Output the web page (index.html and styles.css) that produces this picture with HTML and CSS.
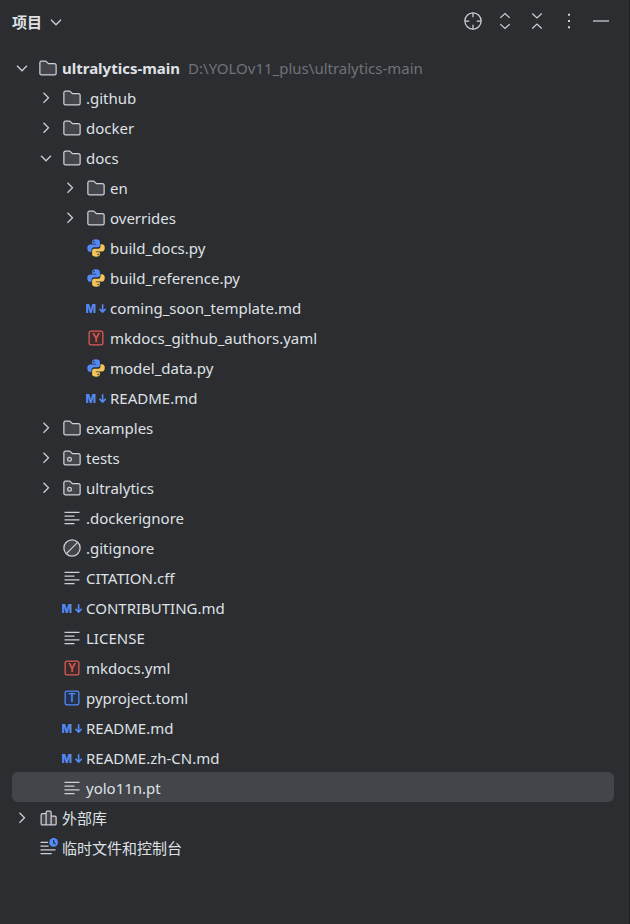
FILE: index.html
```html
<!DOCTYPE html>
<html lang="zh-CN">
<head>
<meta charset="utf-8">
<meta name="viewport" content="width=device-width, initial-scale=1">
<title>项目</title>
<link rel="stylesheet" href="styles.css">
</head>
<body>
<svg class="sprite" aria-hidden="true">
  <symbol id="down" viewBox="0 0 16 16"><path class="line" d="M4 6.200l4 4 4-4"/></symbol>
  <symbol id="right" viewBox="0 0 16 16"><path class="line" d="M6 3.800l4 4-4 4"/></symbol>
  <symbol id="folder" viewBox="0 0 16 16"><path class="shape" d="M8.106 4.346l.148.154H13A1.500 1.500 0 0 1 14.500 6v6.133c0 .82-.568 1.367-1.133 1.367H2.633c-.565 0-1.133-.547-1.133-1.367V3.867c0-.82.568-1.367 1.133-1.367h3.489a.5.5 0 0 1 .361.154z"/></symbol>
  <symbol id="package" viewBox="0 0 16 16"><use href="#folder"/><circle class="shape" cx="6" cy="9" r="1.500"/></symbol>
  <symbol id="python" viewBox="0 0 16 16">
    <path fill="#548af7" fill-rule="evenodd" d="M7.900 1C5.700 1 4.900 1.800 4.900 3v1.600h3.300v.6H3.500C1.900 5.200 1 6.300 1 8.100S1.900 11 3.300 11h1.100V9.500c0-1.200.9-2.100 2.100-2.100h3c.9 0 1.600-.7 1.600-1.600V3c0-1.300-1.100-2-3.200-2zM6.300 2.200a.65.65 0 1 1 0 1.300.65.65 0 0 1 0-1.300z"/>
    <path fill="#f2c55c" fill-rule="evenodd" transform="rotate(180 8 8)" d="M7.900 1C5.700 1 4.900 1.800 4.900 3v1.600h3.300v.6H3.500C1.900 5.200 1 6.300 1 8.100S1.900 11 3.300 11h1.100V9.500c0-1.200.9-2.100 2.100-2.100h3c.9 0 1.600-.7 1.600-1.600V3c0-1.300-1.100-2-3.200-2zM6.300 2.200a.65.65 0 1 1 0 1.300.65.65 0 0 1 0-1.300z"/>
  </symbol>
  <symbol id="markdown" viewBox="0 0 16 16"><text class="md-letter" x="-0.500" y="11.700">M</text><path class="arrow" d="M13.300 5v6M10.800 8.700l2.500 2.500 2.500-2.500"/></symbol>
  <symbol id="yaml" viewBox="0 0 16 16"><rect class="red" x="2.500" y="2.500" width="11" height="11" rx="1.500"/><text class="letter red-letter" x="8" y="11.200">Y</text></symbol>
  <symbol id="toml" viewBox="0 0 16 16"><rect class="blue" x="2.500" y="2.500" width="11" height="11" rx="1.500"/><text class="letter blue-letter" x="8" y="11.200">T</text></symbol>
  <symbol id="text" viewBox="0 0 16 16"><path class="line" d="M2 3.500h12M2 6.500h8M2 9.500h12M2 12.500h8"/></symbol>
  <symbol id="ignored" viewBox="0 0 16 16"><circle class="shape" cx="8" cy="8" r="6.500"/><path class="line" d="M3.500 12.500l9-9"/></symbol>
  <symbol id="library" viewBox="0 0 16 16"><path class="shape" d="M6.500 4.500h-3a1 1 0 0 0-1 1v7a1 1 0 0 0 1 1h3zM6.500 3.500a1 1 0 0 1 1-1h2a1 1 0 0 1 1 1v10h-4zM10.500 6.500h3a1 1 0 0 1 1 1v5a1 1 0 0 1-1 1h-3z"/></symbol>
  <symbol id="scratch" viewBox="0 0 16 16"><path class="line" d="M2 3.500h6M2 6.500h6.500M2 9.500h12M2 12.500h9"/><circle cx="12.500" cy="3.500" r="3.500" fill="#548af7"/><path d="M12.500 1.500v2.200l1.500 1" fill="none" stroke="#25324d"/></symbol>
  <symbol id="locate" viewBox="0 0 16 16"><circle class="line" cx="8" cy="8" r="6.500"/><path class="line" d="M8 1.500V5M8 11v3.500M1.500 8H5M11 8h3.500"/></symbol>
  <symbol id="expand" viewBox="0 0 16 16"><path class="line" d="M4.200 5.500L8 2l3.800 3.500M4.200 10.500L8 14l3.800-3.500"/></symbol>
  <symbol id="collapse" viewBox="0 0 16 16"><path class="line" d="M4.200 2L8 5.500 11.800 2M4.200 14L8 10.500l3.800 3.500"/></symbol>
  <symbol id="more" viewBox="0 0 16 16"><path class="dots" d="M7.200 2.200h1.600v1.600H7.200zM7.200 7.200h1.600v1.600H7.200zM7.200 12.200h1.600v1.600H7.200z"/></symbol>
  <symbol id="hide" viewBox="0 0 16 16"><path class="line" d="M1.600 8h12.800"/></symbol>
</svg>

<main class="panel">
  <header class="header">
    <button class="title" type="button">项目<svg class="icon"><use href="#down"/></svg></button>
    <div class="actions">
      <button type="button" aria-label="定位"><svg class="icon"><use href="#locate"/></svg></button>
      <button type="button" aria-label="全部展开"><svg class="icon"><use href="#expand"/></svg></button>
      <button type="button" aria-label="全部折叠"><svg class="icon"><use href="#collapse"/></svg></button>
      <button type="button" aria-label="选项"><svg class="icon"><use href="#more"/></svg></button>
      <button type="button" aria-label="隐藏"><svg class="icon"><use href="#hide"/></svg></button>
    </div>
  </header>

  <ul class="tree">
    <li class="row"><button class="toggle" type="button" aria-label="折叠"><svg class="icon"><use href="#down"/></svg></button><svg class="icon"><use href="#folder"/></svg><strong>ultralytics-main</strong><span class="path">D:\YOLOv11_plus\ultralytics-main</span></li>
    <li class="row level-1"><button class="toggle" type="button" aria-label="展开"><svg class="icon"><use href="#right"/></svg></button><svg class="icon"><use href="#folder"/></svg><span>.github</span></li>
    <li class="row level-1"><button class="toggle" type="button" aria-label="展开"><svg class="icon"><use href="#right"/></svg></button><svg class="icon"><use href="#folder"/></svg><span>docker</span></li>
    <li class="row level-1"><button class="toggle" type="button" aria-label="折叠"><svg class="icon"><use href="#down"/></svg></button><svg class="icon"><use href="#folder"/></svg><span>docs</span></li>
    <li class="row level-2"><button class="toggle" type="button" aria-label="展开"><svg class="icon"><use href="#right"/></svg></button><svg class="icon"><use href="#folder"/></svg><span>en</span></li>
    <li class="row level-2"><button class="toggle" type="button" aria-label="展开"><svg class="icon"><use href="#right"/></svg></button><svg class="icon"><use href="#folder"/></svg><span>overrides</span></li>
    <li class="row level-2 leaf"><svg class="icon"><use href="#python"/></svg><span>build_docs.py</span></li>
    <li class="row level-2 leaf"><svg class="icon"><use href="#python"/></svg><span>build_reference.py</span></li>
    <li class="row level-2 leaf"><svg class="icon"><use href="#markdown"/></svg><span>coming_soon_template.md</span></li>
    <li class="row level-2 leaf"><svg class="icon"><use href="#yaml"/></svg><span>mkdocs_github_authors.yaml</span></li>
    <li class="row level-2 leaf"><svg class="icon"><use href="#python"/></svg><span>model_data.py</span></li>
    <li class="row level-2 leaf"><svg class="icon"><use href="#markdown"/></svg><span>README.md</span></li>
    <li class="row level-1"><button class="toggle" type="button" aria-label="展开"><svg class="icon"><use href="#right"/></svg></button><svg class="icon"><use href="#folder"/></svg><span>examples</span></li>
    <li class="row level-1"><button class="toggle" type="button" aria-label="展开"><svg class="icon"><use href="#right"/></svg></button><svg class="icon"><use href="#package"/></svg><span>tests</span></li>
    <li class="row level-1"><button class="toggle" type="button" aria-label="展开"><svg class="icon"><use href="#right"/></svg></button><svg class="icon"><use href="#package"/></svg><span>ultralytics</span></li>
    <li class="row level-1 leaf"><svg class="icon"><use href="#text"/></svg><span>.dockerignore</span></li>
    <li class="row level-1 leaf"><svg class="icon"><use href="#ignored"/></svg><span>.gitignore</span></li>
    <li class="row level-1 leaf"><svg class="icon"><use href="#text"/></svg><span>CITATION.cff</span></li>
    <li class="row level-1 leaf"><svg class="icon"><use href="#markdown"/></svg><span>CONTRIBUTING.md</span></li>
    <li class="row level-1 leaf"><svg class="icon"><use href="#text"/></svg><span>LICENSE</span></li>
    <li class="row level-1 leaf"><svg class="icon"><use href="#yaml"/></svg><span>mkdocs.yml</span></li>
    <li class="row level-1 leaf"><svg class="icon"><use href="#toml"/></svg><span>pyproject.toml</span></li>
    <li class="row level-1 leaf"><svg class="icon"><use href="#markdown"/></svg><span>README.md</span></li>
    <li class="row level-1 leaf"><svg class="icon"><use href="#markdown"/></svg><span>README.zh-CN.md</span></li>
    <li class="row level-1 leaf selected"><svg class="icon"><use href="#text"/></svg><span>yolo11n.pt</span></li>
    <li class="row"><button class="toggle" type="button" aria-label="展开"><svg class="icon"><use href="#right"/></svg></button><svg class="icon"><use href="#library"/></svg><span>外部库</span></li>
    <li class="row leaf"><svg class="icon"><use href="#scratch"/></svg><span>临时文件和控制台</span></li>
  </ul>
</main>
</body>
</html>
```
FILE: styles.css
```css
* {
  box-sizing: border-box;
}

body {
  margin: 0;
  background: #2b2d30;
  color: #dfe1e5;
  font: 15px/20px "Noto Sans", "Noto Sans CJK SC", sans-serif;
}

button {
  display: flex;
  align-items: center;
  padding: 0;
  border: 0;
  background: none;
  color: inherit;
  font: inherit;
}

.sprite {
  display: none;
}

.panel {
  min-height: 100vh;
  border-right: 1px solid #1e1f22;
}

.header {
  display: flex;
  align-items: center;
  justify-content: space-between;
  height: 42px;
  padding: 0 18px 0 12px;
}

.title {
  gap: 4px;
  padding-top: 2px;
  font-weight: 700;
}

.actions {
  display: flex;
  gap: 12px;
}

.icon {
  flex: none;
  width: 20px;
  height: 20px;
  overflow: visible;
}

.tree {
  margin: 0;
  padding: 10px 15px 0 12px;
  list-style: none;
}

.row {
  display: flex;
  align-items: center;
  gap: 4px;
  height: 30px;
  padding-top: 2px;
  border-radius: 6px;
  white-space: nowrap;
}

.level-1 {
  padding-left: 24px;
}

.level-2 {
  padding-left: 48px;
}

.toggle {
  margin-right: 2px;
}

.leaf::before {
  content: "";
  width: 22px;
}

.selected {
  background: #43454a;
}

.path {
  margin-left: 4px;
  color: #6f737a;
}

.line {
  fill: none;
  stroke: #ced0d6;
}

.dots {
  fill: #ced0d6;
}

.shape {
  fill: #43454a;
  stroke: #ced0d6;
}

.red {
  fill: #402929;
  stroke: #db5c5c;
}

.blue {
  fill: #25324d;
  stroke: #548af7;
}

.letter {
  font: 600 9px Inter, sans-serif;
  text-anchor: middle;
}

.red-letter {
  fill: #db5c5c;
}

.blue-letter {
  fill: #548af7;
}

.md-letter {
  fill: #548af7;
  font: 800 9px Inter, sans-serif;
}

.arrow {
  fill: none;
  stroke: #548af7;
  stroke-width: 1.3;
}
```
